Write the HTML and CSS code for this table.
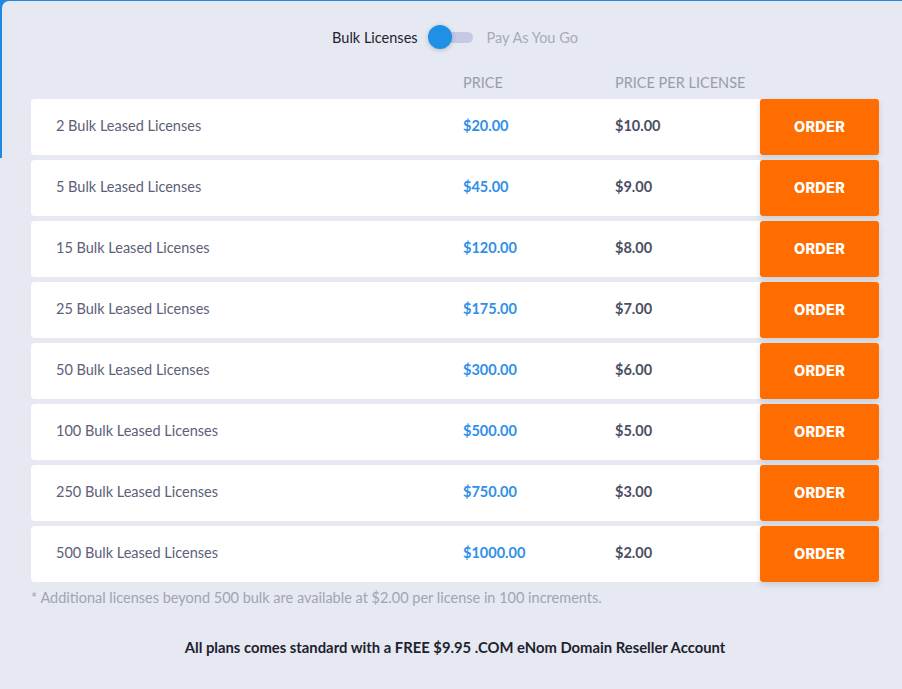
FILE: index.html
```html
<!DOCTYPE html>
<html>
<head>
<meta charset="utf-8">
<link rel="stylesheet" href="styles.css">
</head>
<body>
<div class="panel">
  <div class="switcher">
    <span class="opt active">Bulk Licenses</span>
    <span class="toggle"><span class="track"></span><span class="knob"></span></span>
    <span class="opt">Pay As You Go</span>
  </div>
  <div class="head grid">
    <span></span>
    <span class="th">PRICE</span>
    <span class="th">PRICE PER LICENSE</span>
    <span></span>
  </div>
  <div class="rows">
    <div class="row grid"><span class="name">2 Bulk Leased Licenses</span><span class="price">$20.00</span><span class="per">$10.00</span><a class="order">ORDER</a></div>
    <div class="row grid"><span class="name">5 Bulk Leased Licenses</span><span class="price">$45.00</span><span class="per">$9.00</span><a class="order">ORDER</a></div>
    <div class="row grid"><span class="name">15 Bulk Leased Licenses</span><span class="price">$120.00</span><span class="per">$8.00</span><a class="order">ORDER</a></div>
    <div class="row grid"><span class="name">25 Bulk Leased Licenses</span><span class="price">$175.00</span><span class="per">$7.00</span><a class="order">ORDER</a></div>
    <div class="row grid"><span class="name">50 Bulk Leased Licenses</span><span class="price">$300.00</span><span class="per">$6.00</span><a class="order">ORDER</a></div>
    <div class="row grid"><span class="name">100 Bulk Leased Licenses</span><span class="price">$500.00</span><span class="per">$5.00</span><a class="order">ORDER</a></div>
    <div class="row grid"><span class="name">250 Bulk Leased Licenses</span><span class="price">$750.00</span><span class="per">$3.00</span><a class="order">ORDER</a></div>
    <div class="row grid"><span class="name">500 Bulk Leased Licenses</span><span class="price">$1000.00</span><span class="per">$2.00</span><a class="order">ORDER</a></div>
  </div>
  <p class="note">* Additional licenses beyond 500 bulk are available at $2.00 per license in 100 increments.</p>
  <p class="foot">All plans comes standard with a FREE $9.95 .COM eNom Domain Reseller Account</p>
</div>
</body>
</html>
```
FILE: styles.css
```css
* { box-sizing: border-box; }
html, body { margin: 0; padding: 0; height: 100%; }
body {
  background: linear-gradient(#1e88e5 0, #1e88e5 158px, #e6e9f1 158px) no-repeat;
  background-color: #e6e9f1;
  font-family: Lato, "Open Sans", sans-serif;
  font-size: 14.5px;
  overflow: hidden;
}
.panel {
  margin: 1px 0 0 2px;
  min-height: 700px;
  background: #e6e9f1;
  border-top-left-radius: 7px;
  padding: 24px 23px 0 29px;
}
.switcher {
  display: flex;
  justify-content: center;
  align-items: center;
  height: 24px;
}
.opt { color: #a7abb7; }
.opt.active { color: #1f2230; margin-right: 10px; }
.opt:last-child { margin-left: 14px; }
.toggle {
  position: relative;
  width: 45px;
  height: 24px;
  display: flex;
  align-items: center;
}
.track {
  display: block;
  margin-left: 7px;
  width: 38px;
  height: 11px;
  border-radius: 6px;
  background: #c6c9e6;
}
.knob {
  position: absolute;
  left: 0;
  top: 0;
  width: 24px;
  height: 24px;
  border-radius: 50%;
  background: #1e90e6;
  box-shadow: 0 1px 5px rgba(0,0,0,0.22);
}
.grid {
  display: grid;
  grid-template-columns: 432px 152px 145px 119px;
  align-items: center;
}
.head { margin-top: 22px; height: 22px; }
.th { color: #989ea9; }
.rows { margin-top: 6px; display: flex; flex-direction: column; gap: 5px; }
.row {
  height: 56px;
  background: #fff;
  border-radius: 4px;
}
.name, .price, .per { padding-bottom: 3px; }
.name { padding-left: 25px; color: #5c6078; }
.price { color: #2f8fe8; font-weight: 700; }
.per { color: #4a4e63; font-weight: 700; }
.order {
  height: 56px;
  display: flex;
  align-items: center;
  justify-content: center;
  padding-bottom: 1px;
  background: #ff6d00;
  color: #fff;
  font-family: Inter, sans-serif;
  font-weight: 800;
  font-size: 14.5px;
  letter-spacing: 0.3px;
  border-radius: 3px;
  box-shadow: 0 3px 6px rgba(0,0,0,0.12);
}
.note {
  margin: 7px 0 0 0;
  color: #a0a4b1;
}
.foot {
  margin: 32px 0 0 0;
  text-align: center;
  color: #1f2230;
  font-weight: 700;
  font-size: 14.8px;
}
```
